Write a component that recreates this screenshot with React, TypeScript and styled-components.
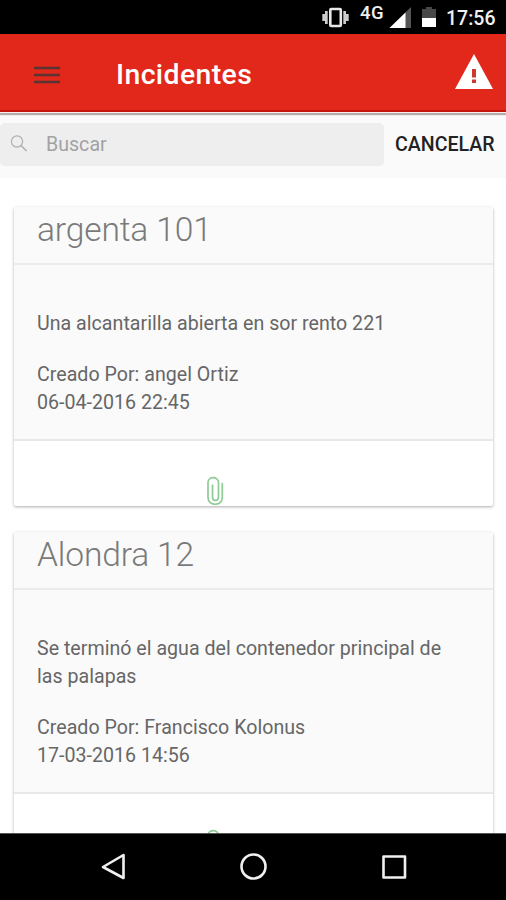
import React from 'react';
import styled, { createGlobalStyle } from 'styled-components';

const GlobalStyle = createGlobalStyle`
  * { box-sizing: border-box; }
  body { margin: 0; background: #fff; font-family: Roboto, 'Liberation Sans', sans-serif; }
  svg { display: block; flex: none; }
`;

const Screen = styled.div`
  width: 506px;
  height: 900px;
  display: flex;
  flex-direction: column;
  overflow: hidden;
  background: #fff;
`;

const StatusBar = styled.div`
  flex: none;
  height: 34px;
  background: #000;
  display: flex;
  justify-content: flex-end;
  padding-right: 11px;
  color: #f0f0f0;
`;

const Network = styled.span`
  width: 29px;
  margin-left: 11px;
  font-size: 18.5px;
  font-weight: 500;
  line-height: 26px;
  letter-spacing: 0.6px;
`;

const Clock = styled.span`
  width: 49px;
  margin-left: 10px;
  font-size: 19.5px;
  font-weight: 500;
  line-height: 37px;
  white-space: nowrap;
`;

const Header = styled.header`
  flex: none;
  height: 78px;
  background: #e2271b;
  border-bottom: 2px solid #c4150d;
  box-shadow: 0 1px 0 #fbeeee, 0 3px 1px #b4abab;
  display: flex;
  align-items: center;
  padding: 6px 12px 0 34px;
  z-index: 1;
`;

const Title = styled.h1`
  flex: 1;
  margin: 0 0 0 56px;
  font-size: 28.4px;
  line-height: 34px;
  font-weight: 500;
  letter-spacing: 0.4px;
  color: #fff;
`;

const WarningIcon = styled.svg`
  margin-bottom: 7px;
`;

const SearchBar = styled.div`
  flex: none;
  height: 66px;
  background: #fafafa;
  display: flex;
  align-items: flex-start;
  padding-top: 11px;
`;

const SearchField = styled.div`
  width: 384px;
  height: 43px;
  border-radius: 5px;
  background: #eee;
  display: flex;
  align-items: center;
  padding-left: 10px;
  gap: 18px;
  font-size: 19.6px;
  color: #a2a2a2;
`;

const SearchIcon = styled.svg`
  margin-bottom: 2px;
`;

const Cancel = styled.span`
  margin-left: 11px;
  font-size: 19.6px;
  font-weight: 500;
  line-height: 43px;
  color: #222;
`;

const List = styled.main`
  flex: 1;
  min-height: 0;
  overflow: hidden;
  padding: 29px 13px 0 14px;
  display: flex;
  flex-direction: column;
  gap: 26px;
`;

const CardBox = styled.article`
  flex: none;
  background: #fff;
  border-radius: 2px;
  box-shadow: 0 1px 3px rgba(0, 0, 0, 0.32);
`;

const CardTitle = styled.h2`
  margin: 0;
  height: 58px;
  padding: 3px 23px 0;
  background: #fafafa;
  border-bottom: 2px solid #ebebeb;
  font-size: 33.6px;
  font-weight: 300;
  line-height: 40px;
  letter-spacing: -0.15px;
  color: #7a7a7a;
`;

const CardBody = styled.div`
  padding: 45px 23px 22px;
  background: #fafafa;
  border-bottom: 2px solid #e8e8e8;
  font-size: 19.6px;
  line-height: 28px;
  letter-spacing: 0.02px;
  color: #666;
`;

const Description = styled.p`
  margin: 0 0 23px;
`;

const Line = styled.div`
  white-space: nowrap;
`;

const CardFooter = styled.div`
  height: 64px;
  padding: 35px 0 0 191px;
  margin-bottom: 1px;
`;

const NavBar = styled.nav`
  flex: none;
  height: 67px;
  background: #000;
  border-top: 1px solid #555;
`;

const Clip = () => (
  <svg width="20" height="30" viewBox="0 0 20 30" fill="none" stroke="#8fcb94" strokeWidth="1.7" strokeLinecap="round">
    <path d="M17.300 7.500V21.500c0 9-14.300 9-14.300 0V6.500c0-6.500 10.500-6.500 10.500 0V21c0 4.500-6 4.500-6 0V9" />
  </svg>
);

const incidents = [
  { title: 'argenta 101', lines: ['Una alcantarilla abierta en sor rento 221'], author: 'angel Ortiz', date: '06-04-2016 22:45' },
  {
    title: 'Alondra 12',
    lines: ['Se terminó el agua del contenedor principal de', 'las palapas'],
    author: 'Francisco Kolonus',
    date: '17-03-2016 14:56',
  },
];

export default function App() {
  return (
    <Screen>
      <GlobalStyle />
      <StatusBar>
        <svg width="29" height="34" viewBox="320 0 29 34">
          <g fill="#ccc">
            <rect x="322.300" y="14" width="2.700" height="7" />
            <rect x="325" y="11" width="2.700" height="13" />
            <rect x="346" y="14" width="2.700" height="7" />
            <rect x="343.300" y="11" width="2.700" height="13" />
          </g>
          <rect x="330.300" y="9" width="10.500" height="17" rx="1" fill="none" stroke="#e8e8e8" strokeWidth="2.600" />
        </svg>
        <Network>4G</Network>
        <svg width="47" height="34" viewBox="389 0 47 34">
          <path d="M389.500 28 411 7v21z" fill="#555" />
          <path d="M389.500 28 405.500 12.500V28z" fill="#fff" />
          <path d="M422 9h4V7h6v2h4v9h-14z" fill="#484848" />
          <path d="M422 18h14v9h-14z" fill="#fff" />
        </svg>
        <Clock>17:56</Clock>
      </StatusBar>
      <Header>
        <svg width="26" height="20" viewBox="0 0 26 20" stroke="#5a3430" strokeWidth="2.600">
          <path d="M0 3h26M0 10h26M0 17h26" />
        </svg>
        <Title>Incidentes</Title>
        <WarningIcon width="40" height="38" viewBox="0 0 40 38">
          <path d="M20 1 39 36H1z" fill="#fff" />
          <path d="M18 16h4v8.500h-4zM18 26.500h4v3.500h-4z" fill="#cf3a30" />
        </WarningIcon>
      </Header>
      <SearchBar>
        <SearchField>
          <SearchIcon width="18" height="20" viewBox="0 0 18 20" fill="none" stroke="#b0b0b0" strokeWidth="1.200">
            <circle cx="7" cy="7.500" r="5.600" />
            <path d="m11 11.500 5.500 5.500" strokeWidth="1.600" />
          </SearchIcon>
          <span>Buscar</span>
        </SearchField>
        <Cancel>CANCELAR</Cancel>
      </SearchBar>
      <List>
        {incidents.map((item) => (
          <CardBox key={item.title}>
            <CardTitle>{item.title}</CardTitle>
            <CardBody>
              <Description>
                {item.lines.map((line) => (
                  <Line key={line}>{line}</Line>
                ))}
              </Description>
              <Line>Creado Por: {item.author}</Line>
              <Line>{item.date}</Line>
            </CardBody>
            <CardFooter>
              <Clip />
            </CardFooter>
          </CardBox>
        ))}
      </List>
      <NavBar>
        <svg width="506" height="66" viewBox="0 834 506 66" fill="none" stroke="#f0f0f0" strokeWidth="2.600" strokeLinejoin="round">
          <path d="M103 867 123.500 855v23z" />
          <circle cx="253.500" cy="866.500" r="12" />
          <rect x="383.500" y="856.500" width="21.500" height="21" />
        </svg>
      </NavBar>
    </Screen>
  );
}
